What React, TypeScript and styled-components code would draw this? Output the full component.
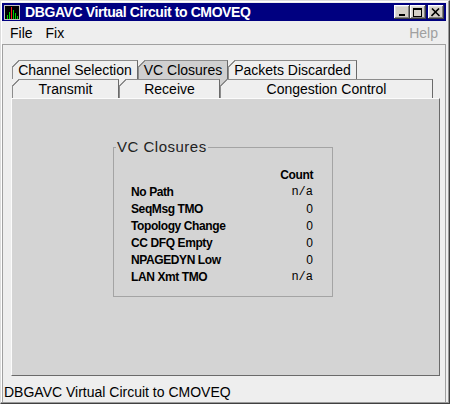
import React from "react";
import styled, { createGlobalStyle } from "styled-components";

const Global = createGlobalStyle`
  html, body { margin: 0; padding: 0; background: #eeeeee; }
  body { font-family: "Liberation Sans", Arial, sans-serif; }
`;

const Frame = styled.div`
  box-sizing: border-box;
  width: 450px;
  height: 404px;
  display: flex;
  flex-direction: column;
  background: #eeeeee;
  border: 1px solid;
  border-color: #dcdcdc #404040 #404040 #dcdcdc;
  box-shadow: inset -1px -1px 0 #9a9a9a, inset 1px 1px 0 #ffffff;
  padding: 2px 3px 1px 1px;
`;

const TitleBar = styled.div`
  height: 18px;
  flex: none;
  background: #000080;
  display: flex;
  align-items: center;
  padding: 0 2px;
  gap: 5px;
`;

const TitleText = styled.span`
  flex: 1;
  color: #ffffff;
  font-family: "Liberation Sans", Arial, sans-serif;
  font-weight: 700;
  font-size: 14px;
  letter-spacing: -0.4px;
  white-space: nowrap;
`;

const WinButtons = styled.div`
  display: flex;
  align-items: center;
`;

const WinButton = styled.div<{ $gap?: boolean }>`
  box-sizing: border-box;
  width: 16px;
  height: 14px;
  margin-left: ${(p) => (p.$gap ? 2 : 0)}px;
  background: #d4d0c8;
  box-shadow: inset -1px -1px 0 #404040, inset 1px 1px 0 #ffffff,
    inset -2px -2px 0 #808080, inset 2px 2px 0 #dfdfdf;
  display: flex;
  align-items: center;
  justify-content: center;
`;

const MenuBar = styled.div`
  height: 23px;
  flex: none;
  display: flex;
  align-items: center;
  padding: 0 8px;
  gap: 13px;
  font-size: 14px;
`;

const MenuItem = styled.span<{ $disabled?: boolean }>`
  color: ${(p) => (p.$disabled ? "#a0a0a0" : "#000000")};
  margin-left: ${(p) => (p.$disabled ? "auto" : "0")};
`;

const Body = styled.div`
  flex: 1;
  min-height: 0;
  display: flex;
  flex-direction: column;
  border: 1px solid #a0a0a0;
  border-bottom: none;
  padding-top: 15px;
`;

const TabArea = styled.div`
  display: flex;
  flex-direction: column;
  padding: 0 5px 0 8px;
`;

const TabRow = styled.div`
  display: flex;
  height: 19px;
  margin-left: 1px;
  flex: none;
`;

const Tab = styled.div<{ $w: number; $selected?: boolean; $behind: string }>`
  position: relative;
  box-sizing: border-box;
  width: ${(p) => p.$w}px;
  height: 19px;
  background: ${(p) => (p.$selected ? "#d0d0d0" : "#efefef")};
  border-top: 1px solid #8c8c8c;
  border-left: 1px solid #8c8c8c;
  border-right: 1px solid #6a6a6a;
  display: flex;
  align-items: center;
  justify-content: center;
  font-size: 14px;
  color: #000000;
  white-space: nowrap;
  &::before {
    content: "";
    position: absolute;
    top: -1px;
    left: -1px;
    width: 7px;
    height: 7px;
    background: linear-gradient(
      135deg,
      ${(p) => p.$behind} 0 46%,
      #8c8c8c 46% 60%,
      transparent 60%
    );
  }
`;

const Panel = styled.div`
  box-sizing: border-box;
  height: 278px;
  flex: none;
  background: #d4d4d4;
  border: 1px solid;
  border-color: #fbfbfb #6a6a6a #6a6a6a #fbfbfb;
  padding: 39px 0 0 101px;
`;

const Group = styled.fieldset`
  box-sizing: border-box;
  width: 220px;
  margin: 0;
  padding: 0;
  border: 1px solid #a4a4a4;
`;

const GroupTitle = styled.legend`
  margin-left: 2px;
  padding: 0 1px;
  font-size: 15px;
  line-height: 18px;
  letter-spacing: 0.5px;
  color: #222222;
`;

const StatGrid = styled.div`
  display: grid;
  grid-template-columns: 1fr auto;
  grid-auto-rows: 17px;
  align-items: center;
  padding: 10px 19px 11px 17px;
`;

const Label = styled.span`
  font-family: "Liberation Sans", Arial, sans-serif;
  font-weight: 700;
  font-size: 12px;
  letter-spacing: -0.4px;
  color: #000000;
`;

const HeadLabel = styled(Label)`
  grid-column: 2;
  text-align: right;
`;

const Value = styled.span<{ $mono: boolean }>`
  font-family: ${(p) =>
    p.$mono
      ? `"Liberation Mono", "Courier New", monospace`
      : `"Liberation Sans", Arial, sans-serif`};
  font-size: 12px;
  color: #000000;
  text-align: right;
`;

const StatusBar = styled.div`
  flex: 1;
  display: flex;
  align-items: center;
  padding: 5px 0 0 1px;
  font-size: 14px;
  color: #000000;
  white-space: nowrap;
`;

const AppIcon = () => (
  <svg width="16" height="15" viewBox="0 0 16 15">
    <rect x="0.5" y="0.5" width="15" height="14" fill="#000" stroke="#c0c0c0" />
    <rect x="3" y="10" width="1" height="4" fill="#00d000" />
    <rect x="5" y="7" width="1" height="7" fill="#00d000" />
    <rect x="7" y="2" width="1" height="12" fill="#ff2020" />
    <rect x="9" y="5" width="1" height="9" fill="#00d000" />
    <rect x="11" y="8" width="1" height="6" fill="#00d000" />
    <rect x="13" y="11" width="1" height="3" fill="#00d000" />
  </svg>
);

const MinGlyph = () => (
  <svg width="10" height="9" viewBox="0 0 10 9">
    <rect x="2" y="6" width="6" height="2" fill="#000" />
  </svg>
);

const MaxGlyph = () => (
  <svg width="10" height="9" viewBox="0 0 10 9">
    <rect x="0.5" y="0.5" width="8" height="8" fill="none" stroke="#000" />
    <rect x="0" y="0" width="9" height="2" fill="#000" />
  </svg>
);

const CloseGlyph = () => (
  <svg width="10" height="9" viewBox="0 0 10 9">
    <path d="M1 0.5 L8.5 8 M8 0.5 L0.5 8" stroke="#000" strokeWidth="1.6" />
  </svg>
);

const rows: [string, string][] = [
  ["No Path", "n/a"],
  ["SeqMsg TMO", "0"],
  ["Topology Change", "0"],
  ["CC DFQ Empty", "0"],
  ["NPAGEDYN Low", "0"],
  ["LAN Xmt TMO", "n/a"],
];

export default function App() {
  const title = "DBGAVC Virtual Circuit to CMOVEQ";
  return (
    <>
      <Global />
      <Frame>
        <TitleBar>
          <AppIcon />
          <TitleText>{title}</TitleText>
          <WinButtons>
            <WinButton>
              <MinGlyph />
            </WinButton>
            <WinButton>
              <MaxGlyph />
            </WinButton>
            <WinButton $gap>
              <CloseGlyph />
            </WinButton>
          </WinButtons>
        </TitleBar>
        <MenuBar>
          <MenuItem>File</MenuItem>
          <MenuItem>Fix</MenuItem>
          <MenuItem $disabled>Help</MenuItem>
        </MenuBar>
        <Body>
          <TabArea>
            <TabRow>
              <Tab $w={126} $behind="#eeeeee">Channel Selection</Tab>
              <Tab $w={90} $behind="#eeeeee" $selected>
                VC Closures
              </Tab>
              <Tab $w={129} $behind="#eeeeee">Packets Discarded</Tab>
            </TabRow>
            <TabRow>
              <Tab $w={107} $behind="#efefef">Transmit</Tab>
              <Tab $w={101} $behind="#efefef">Receive</Tab>
              <Tab $w={213} $behind="#d0d0d0">Congestion Control</Tab>
            </TabRow>
            <Panel>
              <Group>
                <GroupTitle>VC Closures</GroupTitle>
                <StatGrid>
                  <HeadLabel>Count</HeadLabel>
                  {rows.map(([k, v]) => (
                    <React.Fragment key={k}>
                      <Label>{k}</Label>
                      <Value $mono={v !== "0"}>{v}</Value>
                    </React.Fragment>
                  ))}
                </StatGrid>
              </Group>
            </Panel>
          </TabArea>
          <StatusBar>{title}</StatusBar>
        </Body>
      </Frame>
    </>
  );
}
